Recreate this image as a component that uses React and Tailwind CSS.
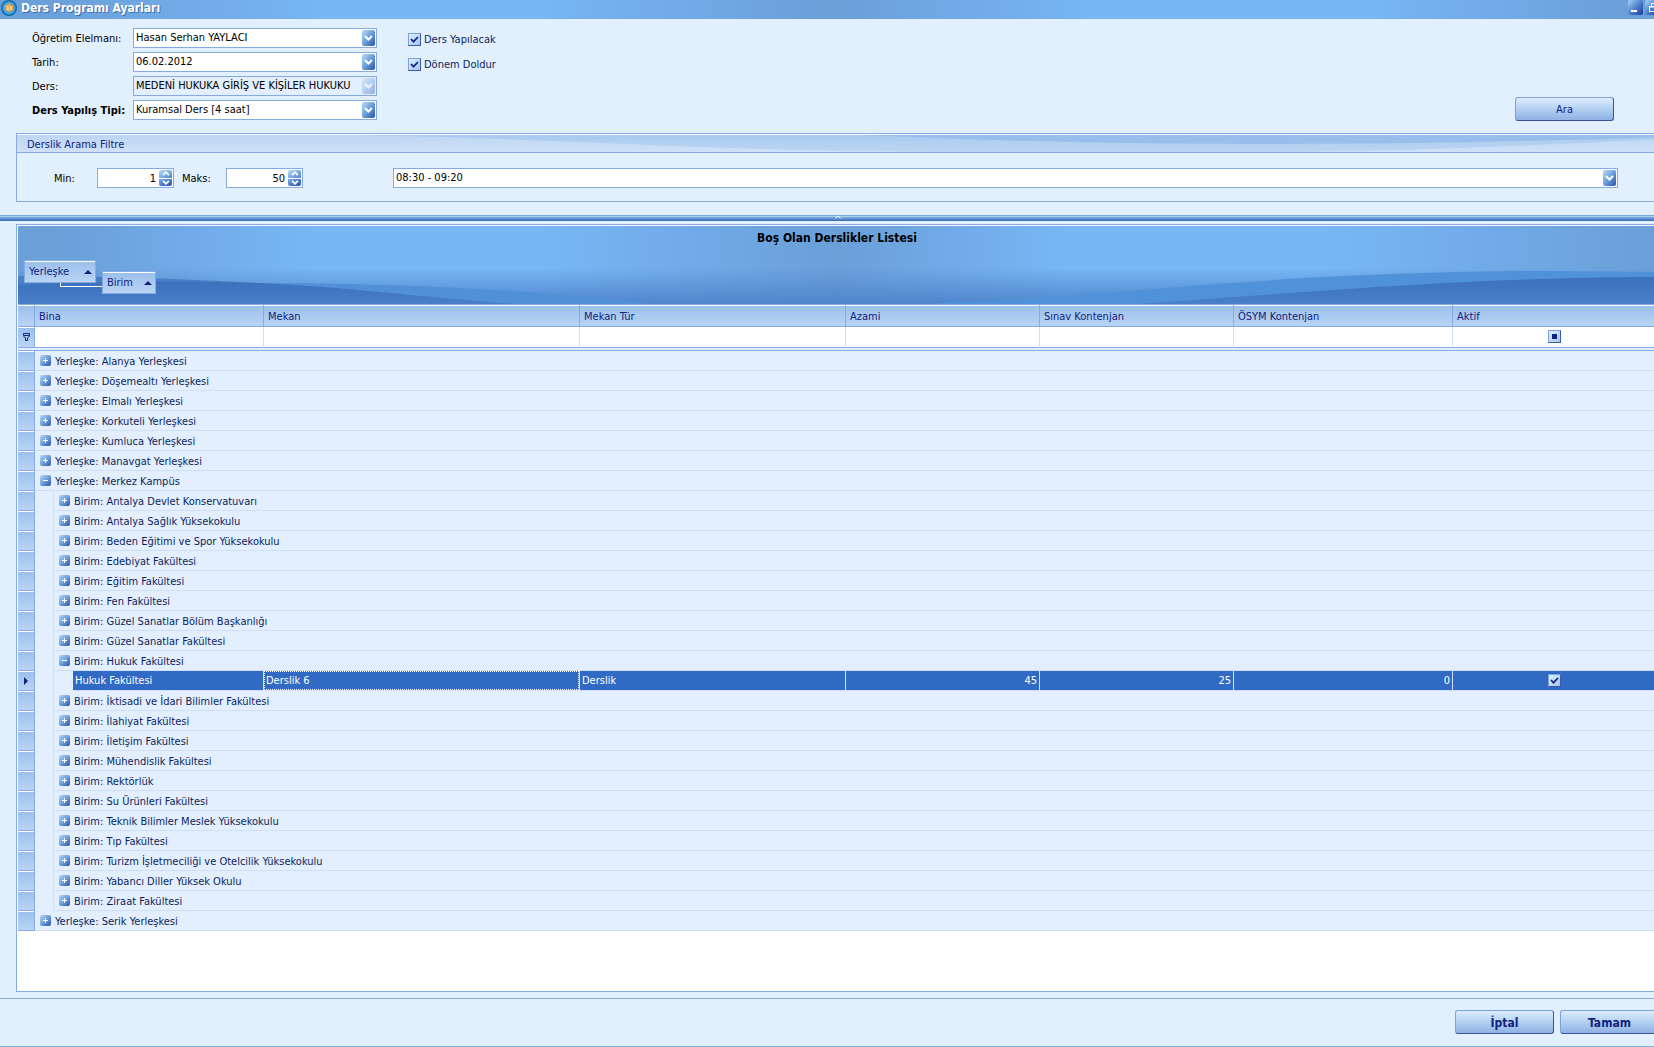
import { Fragment } from 'react';

const yerleskeler = ['Alanya', 'Döşemealtı', 'Elmalı', 'Korkuteli', 'Kumluca', 'Manavgat'];

const birimler = [
  'Antalya Devlet Konservatuvarı',
  'Antalya Sağlık Yüksekokulu',
  'Beden Eğitimi ve Spor Yüksekokulu',
  'Edebiyat Fakültesi',
  'Eğitim Fakültesi',
  'Fen Fakültesi',
  'Güzel Sanatlar Bölüm Başkanlığı',
  'Güzel Sanatlar Fakültesi',
  'Hukuk Fakültesi',
  'İktisadi ve İdari Bilimler Fakültesi',
  'İlahiyat Fakültesi',
  'İletişim Fakültesi',
  'Mühendislik Fakültesi',
  'Rektörlük',
  'Su Ürünleri Fakültesi',
  'Teknik Bilimler Meslek Yüksekokulu',
  'Tıp Fakültesi',
  'Turizm İşletmeciliği ve Otelcilik Yüksekokulu',
  'Yabancı Diller Yüksek Okulu',
  'Ziraat Fakültesi',
];

const columns = ['Bina', 'Mekan', 'Mekan Tür', 'Azami', 'Sınav Kontenjan', 'ÖSYM Kontenjan', 'Aktif'];

function Chevron({ up, className }) {
  return (
    <svg viewBox="0 0 9 6" className={className} fill="none" stroke="white" strokeWidth="2">
      <path d={up ? 'M1 5 L4.5 1.5 L8 5' : 'M1 1 L4.5 4.5 L8 1'} />
    </svg>
  );
}

function Select({ id, value, label, disabled, className = '' }) {
  return (
    <div className={`relative h-5 ${className}`}>
      <select
        id={id}
        disabled={disabled}
        aria-label={label}
        className="block h-5 w-full appearance-none border border-[#86abe3] bg-white pl-[2px] pr-5 text-black opacity-100 disabled:bg-[#e3effe]"
      >
        <option>{value}</option>
      </select>
      <span
        className={`pointer-events-none absolute right-[2px] top-[2px] flex h-4 w-[13px] items-center justify-center rounded-[2px] bg-linear-to-br from-[#b9dcf8] via-[#6c9fdc] to-[#2c4fa6] ${disabled ? 'opacity-40' : ''}`}
      >
        <Chevron className="h-[6px] w-[9px]" />
      </span>
    </div>
  );
}

function Spin({ id, value }) {
  return (
    <div className="relative h-5 w-[77px]">
      <input
        id={id}
        defaultValue={value}
        className="block h-5 w-full border border-[#86abe3] bg-white pr-[17px] text-right text-black"
      />
      <span className="absolute right-[2px] top-[2px] flex h-4 w-[13px] flex-col gap-px">
        <button aria-label="Artır" className="flex flex-1 items-center justify-center rounded-t-[2px] bg-linear-to-br from-[#b9dcf8] to-[#4f83cb]">
          <Chevron up className="h-[5px] w-2" />
        </button>
        <button aria-label="Azalt" className="flex flex-1 items-center justify-center rounded-b-[2px] bg-linear-to-br from-[#7fb0e8] to-[#2c4fa6]">
          <Chevron className="h-[5px] w-2" />
        </button>
      </span>
    </div>
  );
}

function Check({ label, ariaLabel, mixed }) {
  return (
    <label className="flex h-[14px] items-start gap-[3px] text-[#0b1f5c]">
      <span className="relative block size-[13px]">
        <input
          type="checkbox"
          defaultChecked
          aria-label={ariaLabel}
          className="block size-[13px] appearance-none border border-[#7ea3dc] border-b-[#3c5aa8] border-r-[#3c5aa8] bg-linear-to-br from-[#def2ff] to-[#a3c3ee]"
        />
        {mixed ? (
          <span className="pointer-events-none absolute left-1 top-1 size-[5px] bg-[#10237f]" />
        ) : (
          <svg viewBox="0 0 13 13" className="pointer-events-none absolute inset-0 size-[13px]" fill="none" stroke="#10237f" strokeWidth="1.7">
            <path d="M3 6 L5.5 8.7 L10 4" />
          </svg>
        )}
      </span>
      {label}
    </label>
  );
}

function Button({ children, className = '' }) {
  return (
    <button
      className={`h-6 w-[99px] rounded-[3px] border border-[#7ea3dc] border-b-[#3a54a4] border-r-[#3a54a4] bg-linear-to-b from-[#dcedfc] via-[#b3d0f2] to-[#8fb1e4] pt-px text-center text-[#10237f] ${className}`}
    >
      {children}
    </button>
  );
}

function Expander({ open }) {
  return (
    <button aria-label={open ? 'Daralt' : 'Genişlet'} className="block size-[11px] shrink-0">
      <svg viewBox="0 0 11 11" className="size-[11px]">
        <defs>
          <linearGradient id="exp" x1="0" y1="0" x2="1" y2="1">
            <stop offset="0" stopColor="#b4d8f8" />
            <stop offset="0.5" stopColor="#6f9fdc" />
            <stop offset="1" stopColor="#2f52a6" />
          </linearGradient>
        </defs>
        <rect width="11" height="11" rx="2" fill="url(#exp)" />
        <path d={open ? 'M3 5.5 H8' : 'M3 5.5 H8 M5.5 3 V8'} stroke="white" />
      </svg>
    </button>
  );
}

function Indicator({ children }) {
  return (
    <td className="border-b border-r border-[#86abe3] bg-linear-to-b from-[#9abfec] to-[#bad4f3] p-0 shadow-[inset_0_1px_0_#fff]">
      {children}
    </td>
  );
}

function GroupRow({ level = 0, open, children }) {
  return (
    <tr className="h-5">
      <Indicator />
      <td colSpan={7} className={`bg-[#e3effe] p-0 ${level ? 'pl-[18px]' : ''}`}>
        <div className={`flex h-5 items-center gap-1 border-b border-[#cfdff7] pl-[5px] ${level ? 'border-l' : ''}`}>
          <Expander open={open} />
          <span className="pt-[2px]">{children}</span>
        </div>
      </td>
    </tr>
  );
}

function SelectedRow() {
  const cell = 'border-b border-r border-b-[#cfdff7] border-r-[#cfdff7] bg-[#316ac5] px-[2px] py-0';
  return (
    <tr className="h-5 text-white">
      <Indicator>
        <svg viewBox="0 0 4 8" className="mx-auto h-2 w-1" fill="#10237f">
          <path d="M0 0 L4 4 L0 8 Z" />
        </svg>
      </Indicator>
      <td className="bg-[#e3effe] p-0 pl-[18px]">
        <div className="border-l border-[#cfdff7] pl-[19px]">
          <div className="h-5 border-b border-r border-[#cfdff7] bg-[#316ac5] pl-[2px] leading-[19px]">Hukuk Fakültesi</div>
        </div>
      </td>
      <td className="border-b border-r border-[#cfdff7] bg-[#316ac5] p-0">
        <div className="h-[19px] border border-dotted border-white pl-px leading-[17px]">Derslik 6</div>
      </td>
      <td className={cell}>Derslik</td>
      <td className={`${cell} text-right`}>45</td>
      <td className={`${cell} text-right`}>25</td>
      <td className={`${cell} text-right`}>0</td>
      <td className={cell}>
        <div className="flex justify-center">
          <Check ariaLabel="Aktif" />
        </div>
      </td>
    </tr>
  );
}

function ClassroomTable() {
  return (
    <table className="w-full table-fixed border-separate border-spacing-0 text-[#0b1f5c]">
      <colgroup>
        <col className="w-[17px]" />
        <col className="w-[229px]" />
        <col className="w-[316px]" />
        <col className="w-[266px]" />
        <col className="w-[194px]" />
        <col className="w-[194px]" />
        <col className="w-[219px]" />
        <col />
      </colgroup>
      <thead>
        <tr className="h-[23px] text-left text-[#10237f]">
          <th className="border-y border-r border-[#86abe3] bg-linear-to-b from-[#9abfec] to-[#bad4f3] p-0 shadow-[inset_0_1px_0_#fff]" />
          {columns.map((c) => (
            <th key={c} className="border-y border-r border-[#86abe3] bg-linear-to-b from-[#9abfec] to-[#bad4f3] px-1 pb-0 pt-[2px] font-normal shadow-[inset_0_1px_0_#fff]">
              {c}
            </th>
          ))}
        </tr>
        <tr className="h-[21px]">
          <Indicator>
            <svg viewBox="0 0 7 8" className="mx-auto h-2 w-[7px]" fill="none" stroke="#10237f">
              <path d="M0.5 0.5 H6.5 V2.5 H0.5 Z M0.5 3 L2.5 5 V7.5 H4.5 V5 L6.5 3" />
            </svg>
          </Indicator>
          {columns.map((c) => (
            <td key={c} className="border-b border-r border-b-[#86abe3] border-r-[#cfdff7] bg-white p-0 align-top">
              {c === 'Aktif' && (
                <div className="flex justify-center pt-[3px]">
                  <Check mixed ariaLabel="Aktif filtresi" />
                </div>
              )}
            </td>
          ))}
        </tr>
        <tr className="h-[3px]">
          <td colSpan={8} className="h-[3px] border-b border-[#86abe3] bg-[#e3effe] p-0" />
        </tr>
      </thead>
      <tbody>
        {yerleskeler.map((y) => (
          <GroupRow key={y}>Yerleşke: {y} Yerleşkesi</GroupRow>
        ))}
        <GroupRow open>Yerleşke: Merkez Kampüs</GroupRow>
        {birimler.map((b) => (
          <Fragment key={b}>
            <GroupRow level={1} open={b === 'Hukuk Fakültesi'}>Birim: {b}</GroupRow>
            {b === 'Hukuk Fakültesi' && <SelectedRow />}
          </Fragment>
        ))}
        <GroupRow>Yerleşke: Serik Yerleşkesi</GroupRow>
      </tbody>
    </table>
  );
}

function GroupTag({ children, className = '' }) {
  return (
    <button className={`flex h-[23px] items-center justify-between border border-[#86abe3] bg-linear-to-b from-[#9abfec] to-[#bad4f3] pl-1 pr-[3px] text-[#10237f] shadow-[inset_0_1px_0_#fff] ${className}`}>
      <span className="pt-px">{children}</span>
      <svg viewBox="0 0 8 4" className="h-1 w-2" fill="#10237f">
        <path d="M0 4 L4 0 L8 4 Z" />
      </svg>
    </button>
  );
}

function GroupPanel() {
  return (
    <div className="relative h-[78px] bg-[linear-gradient(90deg,#6a9fd8_2%,#78b6f5_18%,#78b6f5_32%,#6a9fd8_50%,#78b6f5_64%,#78b6f5_80%,#6a9fd8_100%)]">
      <svg viewBox="0 0 1640 78" preserveAspectRatio="none" className="absolute inset-0 h-full w-full">
        <defs>
          <linearGradient id="fade" x1="0" y1="0" x2="0" y2="1">
            <stop offset="0" stopColor="#4f86cd" stopOpacity="0" />
            <stop offset="1" stopColor="#4f86cd" />
          </linearGradient>
          <linearGradient id="deep" x1="0" y1="0" x2="0" y2="1">
            <stop offset="0" stopColor="#3a70bd" />
            <stop offset="1" stopColor="#4a80c8" />
          </linearGradient>
        </defs>
        <rect y="42" width="1640" height="36" fill="url(#fade)" />
        <path d="M0 58 L240 57 C360 57 500 62 640 78 H0 Z" fill="#5190d6" />
        <path d="M0 50 C90 50 170 53 240 57 L200 62 H0 Z" fill="#4a7fc6" />
        <path d="M0 59 C80 55 180 55 240 57 C330 61 400 71 500 78 H0 Z" fill="url(#deep)" />
        <path d="M900 78 C1050 72 1150 61 1216 57 C1330 48 1450 45 1532 45 L1640 46 V78 Z" fill="#5092da" />
        <path d="M1120 78 C1240 70 1330 62 1430 57 C1500 53 1580 51 1640 51 V78 Z" fill="url(#deep)" />
      </svg>
      <h2 className="relative pt-1 text-center text-[12px] font-bold leading-4 text-black">Boş Olan Derslikler Listesi</h2>
      <div className="relative flex items-start pl-[6px] pt-[14px]">
        <GroupTag className="w-[72px]">Yerleşke</GroupTag>
        <span className="absolute left-[42px] top-[37px] h-1 w-[42px] border-b border-l border-white" />
        <GroupTag className="ml-[6px] mt-[11px] w-[54px]">Birim</GroupTag>
      </div>
    </div>
  );
}

export default function App() {
  return (
    <div className="min-h-screen overflow-hidden bg-[#e2f0fe] font-['DejaVu_Sans_Condensed','DejaVu_Sans',sans-serif] text-[11px] leading-[14px] text-black">
      <div className="-mr-[9px] flex min-h-screen flex-col">
        <header className="flex h-[19px] items-start bg-[linear-gradient(90deg,#6a9fd8_2%,#78b6f5_20%,#78b6f5_32%,#6a9fd8_50%,#78b6f5_66%,#78b6f5_82%,#6a9fd8_98%)] pr-[3px]">
          <svg viewBox="0 0 16 16" className="ml-px size-4">
            <circle cx="8" cy="8" r="8" fill="#0f6cae" />
            <circle cx="8" cy="8" r="6.5" fill="#43a5dc" />
            <path d="M8 3 L10 5 L12 5 L12 10 L8 12 L4 10 L4 5 L6 5 Z" fill="#f3a63c" />
            <path d="M6 7 H7 V10 M9 7 H10 V10" stroke="#fff3d8" fill="none" />
          </svg>
          <h1 className="ml-1 flex-1 text-[12px] font-bold leading-[17px] text-white [text-shadow:1px_1px_0_#3f6fb0]">Ders Programı Ayarları</h1>
          <div className="flex gap-[2px]">
            <button aria-label="Simge durumuna küçült" className="size-[15px] rounded-[2px] bg-linear-to-br from-[#a8d4f6] via-[#4f83cb] to-[#1d3a96]">
              <svg viewBox="0 0 15 15" className="size-[15px]">
                <path d="M3 11 H9" stroke="white" strokeWidth="2" />
              </svg>
            </button>
            <button aria-label="Önceki boyut" className="size-[15px] rounded-[2px] bg-linear-to-br from-[#a8d4f6] via-[#4f83cb] to-[#1d3a96]">
              <svg viewBox="0 0 15 15" className="size-[15px]" fill="none" stroke="white">
                <path d="M4.5 6.5 H9.5 V11.5 H4.5 Z M4 7 H10 M6.5 6 V3.5 H11.5 V8.5 H10" />
              </svg>
            </button>
          </div>
        </header>

        <section className="flex items-start pl-8 pr-[49px] pt-[9px]">
          <div className="grid grid-cols-[101px_244px] items-center gap-y-1">
            <label htmlFor="ogretim" className="pt-[2px]">Öğretim Elelmanı:</label>
            <Select id="ogretim" value="Hasan Serhan YAYLACI" />
            <label htmlFor="tarih" className="pt-[2px]">Tarih:</label>
            <Select id="tarih" value="06.02.2012" />
            <label htmlFor="ders" className="pt-[2px]">Ders:</label>
            <Select id="ders" value="MEDENİ HUKUKA GİRİŞ VE KİŞİLER HUKUKU" disabled />
            <label htmlFor="tip" className="whitespace-nowrap pt-[2px] font-bold">Ders Yapılış Tipi:</label>
            <Select id="tip" value="Kuramsal Ders [4 saat]" />
          </div>
          <div className="ml-[31px] mt-[5px] flex flex-1 flex-col gap-[11px]">
            <Check label="Ders Yapılacak" />
            <Check label="Dönem Doldur" />
          </div>
          <Button className="mt-[69px]">Ara</Button>
        </section>

        <section className="ml-4 mt-3 border border-r-0 border-[#86abe3]">
          <div className="relative h-[19px] border-b border-[#86abe3] bg-linear-to-b from-[#bcd5f3] to-[#cfe1f7] shadow-[inset_0_1px_0_#fff]">
            <svg viewBox="0 0 1640 17" preserveAspectRatio="none" className="absolute inset-x-0 top-px h-[17px] w-full">
              <defs>
                <linearGradient id="band" x1="0" y1="0" x2="0" y2="1">
                  <stop offset="0" stopColor="#a8caf0" />
                  <stop offset="1" stopColor="#bcd6f3" />
                </linearGradient>
              </defs>
              <path d="M330 0 C540 3 680 16 910 17 H1280 C1420 15 1560 8 1640 4 V0 Z" fill="url(#band)" />
              <path d="M840 0 C960 5 1080 9 1240 9 C1420 9 1560 5 1640 2 V0 Z" fill="#98bfeb" />
            </svg>
            <h2 className="relative pl-[10px] pt-[4px] text-[#10237f]">Derslik Arama Filtre</h2>
          </div>
          <div className="flex items-center pb-[13px] pl-[37px] pr-[45px] pt-[15px]">
            <label htmlFor="min" className="w-[43px] pt-[2px]">Min:</label>
            <Spin id="min" value="1" />
            <label htmlFor="maks" className="ml-2 w-11 pt-[2px]">Maks:</label>
            <Spin id="maks" value="50" />
            <Select label="Ders saati" value="08:30 - 09:20" className="ml-[90px] flex-1" />
          </div>
        </section>

        <div className="mt-[13px] flex h-[6px] justify-center bg-[linear-gradient(180deg,#7ba6de_17%,#a3d0f0_17%,#a3d0f0_34%,#7fb0e6_34%,#3a66b2_100%)] pl-3">
          <svg viewBox="0 0 6 4" className="h-1 w-[6px]" fill="none" stroke="white">
            <path d="M0.5 3.5 L3 1 L5.5 3.5" />
          </svg>
        </div>

        <main className="ml-4 mr-[6px] mt-[3px] flex flex-1 flex-col border border-[#86abe3] bg-white pl-px pt-px">
          <GroupPanel />
          <ClassroomTable />
        </main>

        <footer className="mt-[6px] flex h-[49px] items-start justify-end gap-[6px] border-y border-[#86abe3] pr-1 pt-[11px]">
          <Button className="text-[12px] font-bold">İptal</Button>
          <Button className="text-[12px] font-bold">Tamam</Button>
        </footer>
      </div>
    </div>
  );
}
